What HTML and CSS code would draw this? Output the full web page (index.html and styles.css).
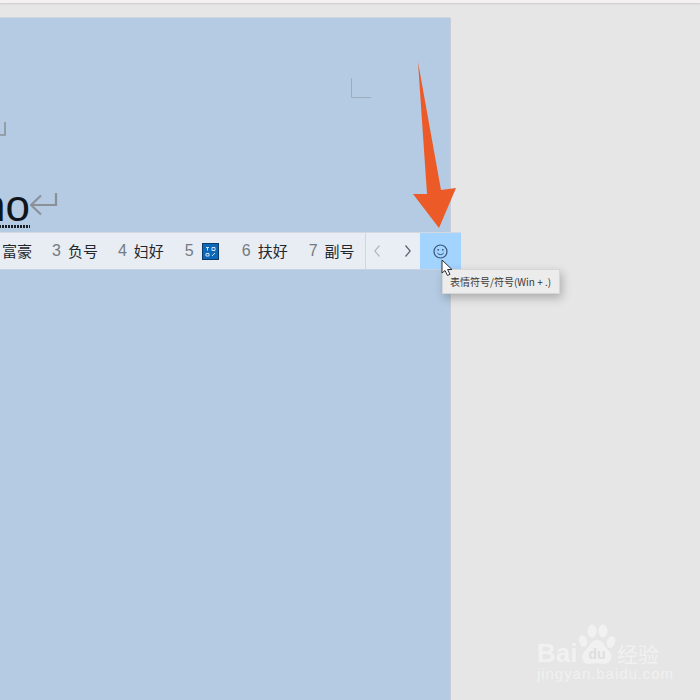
FILE: index.html
```html
<!DOCTYPE html>
<html lang="zh">
<head>
<meta charset="utf-8">
<title>表情符号</title>
<link rel="stylesheet" href="styles.css">
</head>
<body>
<div class="app">
  <div class="topstrip"></div>
  <div class="workspace">
    <div class="doc">
      <div class="corner"></div>
      <svg class="ret-small" width="6" height="15" viewBox="0 0 6 15"><path d="M5 0V13H0" fill="none" stroke="#8a929a" stroke-width="1.600"/></svg>
      <div class="typed"><span class="word">no</span><svg class="ret-big" width="28" height="24" viewBox="0 0 28 24"><path d="M26 1V13H1M11 3.500L1 13L11 22.500" fill="none" stroke="#8b9096" stroke-width="2.200"/></svg></div>
    </div>
  </div>

  <div class="candbar">
    <div class="cands">
      <span class="cand first"><span class="txt">富豪</span></span>
      <span class="cand"><span class="num">3</span><span class="txt">负号</span></span>
      <span class="cand"><span class="num">4</span><span class="txt">妇好</span></span>
      <span class="cand five"><span class="num">5</span>
        <svg class="symbol" width="17" height="17" viewBox="0 0 17 17"><rect width="17" height="17" fill="#0c68b8"/><rect x=".5" y=".5" width="16" height="16" fill="none" stroke="#123a66"/><path d="M4 4.500h3M5.500 4.500v3M10 4.500h3v3h-3zM4 10.500h3v2.500H4zM10 13l3-3" fill="none" stroke="#cfe2f3" stroke-width="1"/></svg>
      </span>
      <span class="cand six"><span class="num">6</span><span class="txt">扶好</span></span>
      <span class="cand"><span class="num">7</span><span class="txt">副号</span></span>
    </div>
    <div class="pager">
      <svg width="6" height="12" viewBox="0 0 6 12"><path d="M5.500 .5L.8 6L5.500 11.500" fill="none" stroke="#b3b8bf" stroke-width="1.200"/></svg>
      <svg width="6" height="12" viewBox="0 0 6 12"><path d="M.5 .5L5.200 6L.5 11.500" fill="none" stroke="#5a6068" stroke-width="1.200"/></svg>
    </div>
    <div class="emoji">
      <svg width="15" height="15" viewBox="0 0 15 15"><circle cx="7.500" cy="7.500" r="6.500" fill="none" stroke="#3a5676" stroke-width="1.200"/><circle cx="5.200" cy="5.800" r=".9" fill="#3a5676"/><circle cx="9.800" cy="5.800" r=".9" fill="#3a5676"/><path d="M4.300 9Q7.500 12.400 10.700 9" fill="none" stroke="#3a5676" stroke-width="1"/></svg>
    </div>
  </div>

  <div class="tooltip">表情符号/符号(Win + .)</div>

  <svg class="cursor" width="13" height="18" viewBox="0 0 13 18"><path d="M1 1V14L4 11.500L6.500 16.500L9 15.300L6.600 10.500H11Z" fill="#fff" stroke="#2a2f36" stroke-width="1"/></svg>

  <svg class="arrow" width="50" height="172" viewBox="0 0 50 172"><polygon points="5,0 14,132 0,132 26,166 43,126 28,128" fill="#ec5a28"/></svg>

  <div class="mark">
    <div class="mark-top">
      <span class="bai">Bai</span>
      <svg class="paw" width="38" height="42" viewBox="0 0 38 42">
        <ellipse cx="5" cy="17" rx="4" ry="6" fill="#f1f1f1" transform="rotate(-18 5 17)"/>
        <ellipse cx="14" cy="7" rx="4.500" ry="6.500" fill="#f1f1f1"/>
        <ellipse cx="25" cy="7" rx="4.500" ry="6.500" fill="#f1f1f1"/>
        <ellipse cx="33" cy="18" rx="4" ry="6" fill="#f1f1f1" transform="rotate(18 33 18)"/>
        <path d="M19 16C26 16 27 24 31 27C36 31 33 40 26 40C23 40 21 39 19 39C16 39 14 40 11 40C4 40 2 32 7 27C11 24 12 16 19 16Z" fill="#f1f1f1"/>
        <text class="du" x="19" y="35" text-anchor="middle">du</text>
      </svg>
      <span class="jy">经验</span>
    </div>
    <div class="url">jingyan.baidu.com</div>
  </div>
</div>
</body>
</html>
```
FILE: styles.css
```css
html, body {
  margin: 0;
  padding: 0;
}

.app {
  position: relative;
  width: 700px;
  height: 700px;
  overflow: hidden;
  background: #e6e6e6;
  font-family: "Noto Sans CJK SC", "Liberation Sans", sans-serif;
}

.topstrip {
  height: 3px;
  background: #f2f0f0;
  box-shadow: 0 1px 2px rgba(0, 0, 0, .12);
}

.workspace {
  padding-top: 15px;
  height: 682px;
}

.doc {
  position: relative;
  width: 450px;
  height: 682px;
  background: #b4cbe3;
  box-shadow: 1px 0 0 #c6ced6, 0 -1px 0 #cfd5db;
  overflow: hidden;
}

.corner {
  position: absolute;
  left: 351px;
  top: 60px;
  width: 19px;
  height: 19px;
  border-left: 1px solid #9eacbb;
  border-bottom: 1px solid #9eacbb;
}

.ret-small {
  position: absolute;
  left: 0;
  top: 104px;
}

.typed {
  position: absolute;
  left: -19px;
  top: 160px;
  display: flex;
  align-items: flex-start;
}

.word {
  display: block;
  font-family: "Liberation Sans", sans-serif;
  font-size: 44px;
  line-height: 56px;
  color: #10151b;
  height: 50px;
  background: repeating-linear-gradient(90deg, #1a1f26 0 2px, transparent 2px 3px) left bottom / 100% 3px no-repeat;
}

.ret-big {
  margin-top: 14px;
}

.candbar {
  position: absolute;
  left: 0;
  top: 232px;
  width: 461px;
  height: 38px;
  box-sizing: border-box;
  border-top: 1px solid #d2d9e2;
  border-bottom: 1px solid #c9d2dc;
  background: #e8edf4;
  display: flex;
  align-items: stretch;
}

.cands {
  width: 366px;
  padding-left: 2px;
  box-sizing: border-box;
  display: flex;
  align-items: center;
  gap: 20px;
  border-right: 1px solid #d0d6de;
}

.cand {
  display: flex;
  align-items: center;
  gap: 7px;
}

.five {
  margin-left: 1px;
  gap: 8px;
}

.six {
  margin-left: 3px;
  margin-right: 1px;
}

.num {
  font-family: "Liberation Sans", sans-serif;
  font-size: 16px;
  color: #747b83;
  line-height: 20px;
}

.txt {
  font-size: 15px;
  line-height: 20px;
  color: #23282e;
}

.symbol {
  display: block;
}

.pager {
  width: 54px;
  box-sizing: border-box;
  padding: 0 9px 0 8px;
  display: flex;
  align-items: center;
  justify-content: space-between;
  background: #e9eef5;
}

.emoji {
  width: 41px;
  background: #a3d3ff;
  display: flex;
  align-items: center;
  justify-content: center;
}

.emoji svg {
  display: block;
}

.tooltip {
  position: absolute;
  left: 442px;
  top: 269px;
  width: 118px;
  height: 25px;
  box-sizing: border-box;
  padding-left: 7px;
  background: #ececec;
  border: 1px solid #d6d6d6;
  box-shadow: 2px 4px 10px rgba(0, 0, 0, .25);
  font-size: 10px;
  line-height: 23px;
  color: #3a3a3a;
  white-space: nowrap;
}

.cursor {
  position: absolute;
  left: 441px;
  top: 259px;
}

.arrow {
  position: absolute;
  left: 413px;
  top: 62px;
}

.mark {
  position: absolute;
  left: 537px;
  top: 624px;
  width: 126px;
  color: #f1f1f1;
}

.mark-top {
  display: flex;
  align-items: flex-end;
  height: 42px;
}

.bai {
  font-family: "Liberation Sans", sans-serif;
  font-weight: 700;
  font-size: 26px;
  line-height: 26px;
  width: 41px;
}

.paw {
  display: block;
}

.du {
  font-family: "Liberation Sans", sans-serif;
  font-size: 14px;
  font-weight: 700;
  fill: #dedede;
}

.jy {
  font-size: 21px;
  line-height: 26px;
  margin-left: 1px;
  white-space: nowrap;
}

.url {
  font-family: "Liberation Sans", sans-serif;
  font-size: 15px;
  line-height: 16px;
  letter-spacing: .95px;
  white-space: nowrap;
}
```
